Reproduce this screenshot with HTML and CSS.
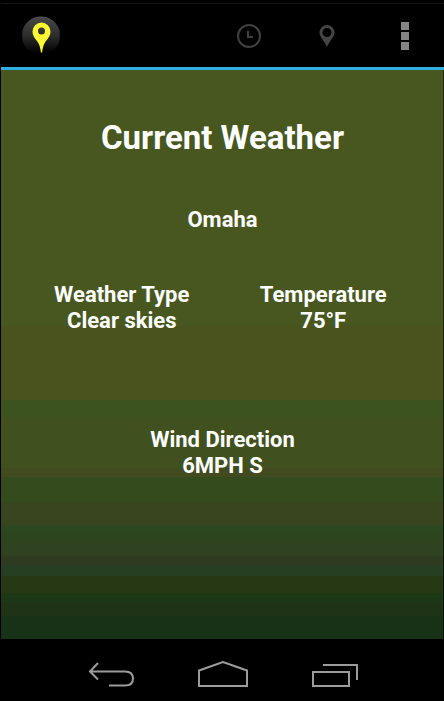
FILE: index.html
```html
<!DOCTYPE html>
<html lang="en">
<head>
<meta charset="utf-8">
<meta name="viewport" content="width=device-width, initial-scale=1">
<title>Current Weather</title>
<link rel="stylesheet" href="styles.css">
</head>
<body>
<div class="screen">
  <header class="action-bar">
    <svg class="app-icon" viewBox="0 0 40 40" aria-hidden="true">
      <defs>
        <linearGradient id="orb" x1="0" y1="0" x2="0" y2="1">
          <stop offset="0" stop-color="#484848"/>
          <stop offset="0.5" stop-color="#2c2c2c"/>
          <stop offset="0.95" stop-color="#000"/>
        </linearGradient>
        <linearGradient id="rim" x1="0" y1="0" x2="0" y2="1">
          <stop offset="0" stop-color="#5a5a5a"/>
          <stop offset="0.4" stop-color="#222"/>
          <stop offset="0.6" stop-color="#000" stop-opacity="0"/>
        </linearGradient>
      </defs>
      <circle cx="20" cy="20" r="19" fill="url(#orb)" stroke="url(#rim)"/>
      <path fill="#fdf834" fill-rule="evenodd" d="M20.500 6.500a9 9 0 0 0-9 9c0 5 3.500 7.500 5.800 11.500 1.700 3.200 2.200 6 2.600 9.500h1.200c.4-3.500.9-6.300 2.600-9.500 2.300-4 5.800-6.500 5.800-11.500a9 9 0 0 0-9-9zm0 5a3.500 3.500 0 1 1 0 7 3.500 3.500 0 0 1 0-7z"/>
    </svg>
    <div class="actions">
      <button class="action" type="button" aria-label="History">
        <svg width="24" height="24" viewBox="0 0 24 24" fill="none" stroke="#404040">
          <circle cx="12" cy="12" r="11" stroke-width="2"/>
          <path d="M11 7v6h5" stroke-width="2"/>
        </svg>
      </button>
      <button class="action" type="button" aria-label="Location">
        <svg width="16" height="22" viewBox="0 0 16 22">
          <path fill="#444" fill-rule="evenodd" d="M8 0a7.500 7.500 0 0 0-7.500 7.500C.5 12 5 15 8 22c3-7 7.500-10 7.500-14.500A7.500 7.500 0 0 0 8 0zm0 3a4.500 4.500 0 1 1 0 9 4.500 4.500 0 0 1 0-9z"/>
        </svg>
      </button>
      <button class="action" type="button" aria-label="More options">
        <svg width="8" height="28" viewBox="0 0 8 28" fill="#858585">
          <path d="M0 0h8v8H0zM0 10h8v8H0zM0 20h8v8H0z"/>
        </svg>
      </button>
    </div>
  </header>
  <main class="weather">
    <h1 class="title">Current Weather</h1>
    <p class="city">Omaha</p>
    <dl class="readings">
      <div class="reading"><dt>Weather Type</dt><dd>Clear skies</dd></div>
      <div class="reading"><dt>Temperature</dt><dd>75°F</dd></div>
      <div class="reading reading-wide"><dt>Wind Direction</dt><dd>6MPH S</dd></div>
    </dl>
  </main>
  <nav class="nav-bar" aria-label="System">
    <button class="nav-button" type="button" aria-label="Back">
      <svg width="48" height="28" viewBox="0 0 48 28" fill="none" stroke="#9c9c9c" stroke-width="2">
        <path d="M11 2L3 10.500l8 8M3 10.500h35q8 0 8 7t-8 7H22"/>
      </svg>
    </button>
    <button class="nav-button" type="button" aria-label="Home">
      <svg width="52" height="28" viewBox="0 0 52 28" fill="none" stroke="#9c9c9c" stroke-width="2">
        <path d="M2 9.500L26 1l24 8.500V25H2z"/>
      </svg>
    </button>
    <button class="nav-button" type="button" aria-label="Recent apps">
      <svg width="48" height="28" viewBox="0 0 48 28" fill="none" stroke="#9c9c9c" stroke-width="2">
        <path d="M2 11h36v14H2zM12 4h34v15"/>
      </svg>
    </button>
  </nav>
</div>
</body>
</html>
```
FILE: styles.css
```css
* {
  box-sizing: border-box;
  margin: 0;
  padding: 0;
}

body {
  background: #000;
  color: #fff;
  font-family: Roboto, "Liberation Sans", sans-serif;
}

.screen {
  display: flex;
  flex-direction: column;
  min-height: 100vh;
  padding: 3px 0 0 1px;
}

button {
  border: 0;
  background: none;
}

svg {
  display: block;
}

.action-bar {
  display: flex;
  align-items: center;
  justify-content: space-between;
  height: 67px;
  padding-left: 20px;
  border-top: 1px solid #141414;
  border-bottom: 3px solid #2fafe0;
}

.app-icon {
  width: 40px;
  height: 40px;
}

.actions {
  display: flex;
}

.action {
  display: grid;
  place-items: center;
  width: 78px;
  height: 60px;
}

.weather {
  flex: 1;
  padding: 48px 20px 40px;
  font-size: 22px;
  font-weight: 700;
  line-height: 26px;
  text-align: center;
  background: linear-gradient(
    #48571f 0 45%, #4a521e 45% 58%,
    #3d531f 58% 61%, #40501f 61% 70%, #424a20 70% 71.500%,
    #344b1e 71.500% 76%, #38451f 76% 80%,
    #2c471f 80%, #2f421f 85.500%, #2f3b20 85.500% 87%,
    #263f22 87% 89%, #273814 89% 92%,
    #1d3816 92% 93.500%, #1f3316 93.500% 96%, #173217 96%
  );
  box-shadow: inset -1px 0 rgba(0, 0, 0, 0.6);
}

.title {
  font-size: 33px;
  line-height: 40px;
}

.city {
  margin-top: 49px;
}

.readings {
  display: grid;
  grid-template-columns: 1fr 1fr;
  row-gap: 93px;
  margin-top: 49px;
}

.reading-wide {
  grid-column: 1 / -1;
}

.nav-bar {
  display: flex;
  justify-content: center;
  height: 62px;
}

.nav-button {
  display: grid;
  place-items: center;
  width: 112px;
  padding-top: 9px;
}
```
